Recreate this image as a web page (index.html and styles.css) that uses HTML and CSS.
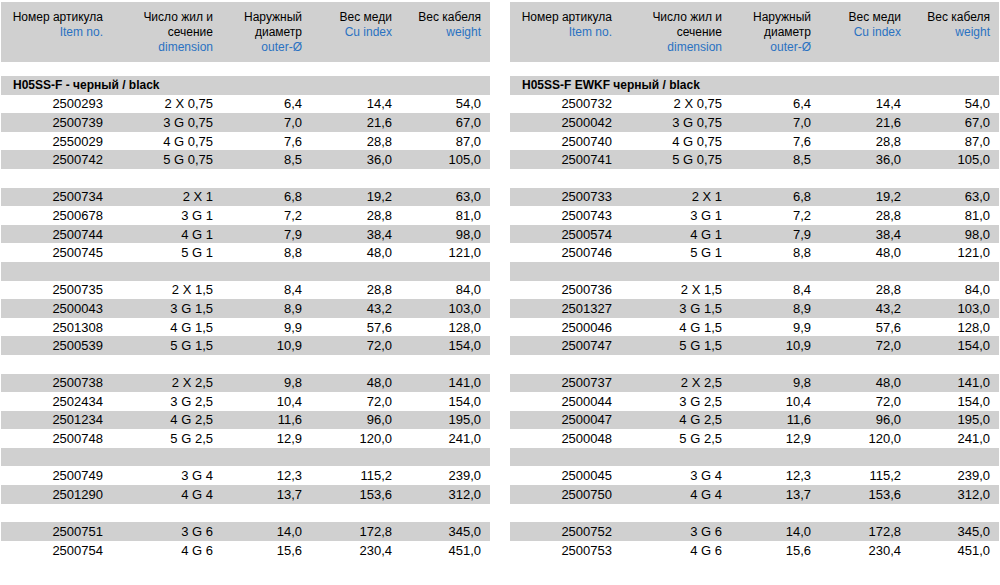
FILE: index.html
```html
<!DOCTYPE html>
<html lang="ru">
<head>
<meta charset="utf-8">
<title>H05SS-F</title>
<link rel="stylesheet" href="styles.css">
</head>
<body>
<div class="page">
  <section class="sheet">
    <div class="head">
      <div class="hc">Номер артикула<br><span class="en">Item no.</span></div>
      <div class="hc">Число жил и<br>сечение<br><span class="en">dimension</span></div>
      <div class="hc">Наружный<br>диаметр<br><span class="en">outer-Ø</span></div>
      <div class="hc">Вес меди<br><span class="en">Cu index</span></div>
      <div class="hc">Вес кабеля<br><span class="en">weight</span></div>
    </div>
    <div class="rows">
      <div class="row title">H05SS-F - черный / black</div>
      <div class="row"><span>2500293</span><span>2 X 0,75</span><span>6,4</span><span>14,4</span><span>54,0</span></div>
      <div class="row"><span>2500739</span><span>3 G 0,75</span><span>7,0</span><span>21,6</span><span>67,0</span></div>
      <div class="row"><span>2550029</span><span>4 G 0,75</span><span>7,6</span><span>28,8</span><span>87,0</span></div>
      <div class="row"><span>2500742</span><span>5 G 0,75</span><span>8,5</span><span>36,0</span><span>105,0</span></div>
      <div class="row"></div>
      <div class="row"><span>2500734</span><span>2 X 1</span><span>6,8</span><span>19,2</span><span>63,0</span></div>
      <div class="row"><span>2500678</span><span>3 G 1</span><span>7,2</span><span>28,8</span><span>81,0</span></div>
      <div class="row"><span>2500744</span><span>4 G 1</span><span>7,9</span><span>38,4</span><span>98,0</span></div>
      <div class="row"><span>2500745</span><span>5 G 1</span><span>8,8</span><span>48,0</span><span>121,0</span></div>
      <div class="row"></div>
      <div class="row"><span>2500735</span><span>2 X 1,5</span><span>8,4</span><span>28,8</span><span>84,0</span></div>
      <div class="row"><span>2500043</span><span>3 G 1,5</span><span>8,9</span><span>43,2</span><span>103,0</span></div>
      <div class="row"><span>2501308</span><span>4 G 1,5</span><span>9,9</span><span>57,6</span><span>128,0</span></div>
      <div class="row"><span>2500539</span><span>5 G 1,5</span><span>10,9</span><span>72,0</span><span>154,0</span></div>
      <div class="row"></div>
      <div class="row"><span>2500738</span><span>2 X 2,5</span><span>9,8</span><span>48,0</span><span>141,0</span></div>
      <div class="row"><span>2502434</span><span>3 G 2,5</span><span>10,4</span><span>72,0</span><span>154,0</span></div>
      <div class="row"><span>2501234</span><span>4 G 2,5</span><span>11,6</span><span>96,0</span><span>195,0</span></div>
      <div class="row"><span>2500748</span><span>5 G 2,5</span><span>12,9</span><span>120,0</span><span>241,0</span></div>
      <div class="row"></div>
      <div class="row"><span>2500749</span><span>3 G 4</span><span>12,3</span><span>115,2</span><span>239,0</span></div>
      <div class="row"><span>2501290</span><span>4 G 4</span><span>13,7</span><span>153,6</span><span>312,0</span></div>
      <div class="row"></div>
      <div class="row"><span>2500751</span><span>3 G 6</span><span>14,0</span><span>172,8</span><span>345,0</span></div>
      <div class="row"><span>2500754</span><span>4 G 6</span><span>15,6</span><span>230,4</span><span>451,0</span></div>
    </div>
  </section>
  <section class="sheet">
    <div class="head">
      <div class="hc">Номер артикула<br><span class="en">Item no.</span></div>
      <div class="hc">Число жил и<br>сечение<br><span class="en">dimension</span></div>
      <div class="hc">Наружный<br>диаметр<br><span class="en">outer-Ø</span></div>
      <div class="hc">Вес меди<br><span class="en">Cu index</span></div>
      <div class="hc">Вес кабеля<br><span class="en">weight</span></div>
    </div>
    <div class="rows">
      <div class="row title">H05SS-F EWKF черный / black</div>
      <div class="row"><span>2500732</span><span>2 X 0,75</span><span>6,4</span><span>14,4</span><span>54,0</span></div>
      <div class="row"><span>2500042</span><span>3 G 0,75</span><span>7,0</span><span>21,6</span><span>67,0</span></div>
      <div class="row"><span>2500740</span><span>4 G 0,75</span><span>7,6</span><span>28,8</span><span>87,0</span></div>
      <div class="row"><span>2500741</span><span>5 G 0,75</span><span>8,5</span><span>36,0</span><span>105,0</span></div>
      <div class="row"></div>
      <div class="row"><span>2500733</span><span>2 X 1</span><span>6,8</span><span>19,2</span><span>63,0</span></div>
      <div class="row"><span>2500743</span><span>3 G 1</span><span>7,2</span><span>28,8</span><span>81,0</span></div>
      <div class="row"><span>2500574</span><span>4 G 1</span><span>7,9</span><span>38,4</span><span>98,0</span></div>
      <div class="row"><span>2500746</span><span>5 G 1</span><span>8,8</span><span>48,0</span><span>121,0</span></div>
      <div class="row"></div>
      <div class="row"><span>2500736</span><span>2 X 1,5</span><span>8,4</span><span>28,8</span><span>84,0</span></div>
      <div class="row"><span>2501327</span><span>3 G 1,5</span><span>8,9</span><span>43,2</span><span>103,0</span></div>
      <div class="row"><span>2500046</span><span>4 G 1,5</span><span>9,9</span><span>57,6</span><span>128,0</span></div>
      <div class="row"><span>2500747</span><span>5 G 1,5</span><span>10,9</span><span>72,0</span><span>154,0</span></div>
      <div class="row"></div>
      <div class="row"><span>2500737</span><span>2 X 2,5</span><span>9,8</span><span>48,0</span><span>141,0</span></div>
      <div class="row"><span>2500044</span><span>3 G 2,5</span><span>10,4</span><span>72,0</span><span>154,0</span></div>
      <div class="row"><span>2500047</span><span>4 G 2,5</span><span>11,6</span><span>96,0</span><span>195,0</span></div>
      <div class="row"><span>2500048</span><span>5 G 2,5</span><span>12,9</span><span>120,0</span><span>241,0</span></div>
      <div class="row"></div>
      <div class="row"><span>2500045</span><span>3 G 4</span><span>12,3</span><span>115,2</span><span>239,0</span></div>
      <div class="row"><span>2500750</span><span>4 G 4</span><span>13,7</span><span>153,6</span><span>312,0</span></div>
      <div class="row"></div>
      <div class="row"><span>2500752</span><span>3 G 6</span><span>14,0</span><span>172,8</span><span>345,0</span></div>
      <div class="row"><span>2500753</span><span>4 G 6</span><span>15,6</span><span>230,4</span><span>451,0</span></div>
    </div>
  </section>
</div>
</body>
</html>
```
FILE: styles.css
```css
html, body {
  margin: 0;
  padding: 0;
  background: #ffffff;
}
body {
  font-family: "Liberation Sans", Arial, sans-serif;
  color: #000000;
}
.page {
  display: flex;
  gap: 20px;
  padding: 2px 1px 0 1px;
}
.sheet {
  width: 489px;
  flex: none;
}
.head {
  height: 60px;
  box-sizing: border-box;
  padding: 8px 9px 0 0;
  background: #d0d0d0;
  display: grid;
  grid-template-columns: 102px 110px 89px 90px 89px;
  font-size: 12px;
  line-height: 15px;
  color: #000000;
}
.hc {
  text-align: right;
  white-space: nowrap;
}
.en {
  color: #2a72c2;
}
.rows {
  margin-top: 14px;
}
.row {
  height: 18.6px;
  box-sizing: border-box;
  padding-right: 9px;
  display: grid;
  grid-template-columns: 102px 110px 89px 90px 89px;
  align-items: center;
  font-size: 13px;
  line-height: 15px;
}
.row span {
  text-align: right;
  white-space: nowrap;
}
.row:nth-child(odd) {
  background: #d0d0d0;
}
.row.title {
  display: block;
  padding-left: 12px;
  font-size: 12px;
  font-weight: bold;
  line-height: 18.6px;
}
```
